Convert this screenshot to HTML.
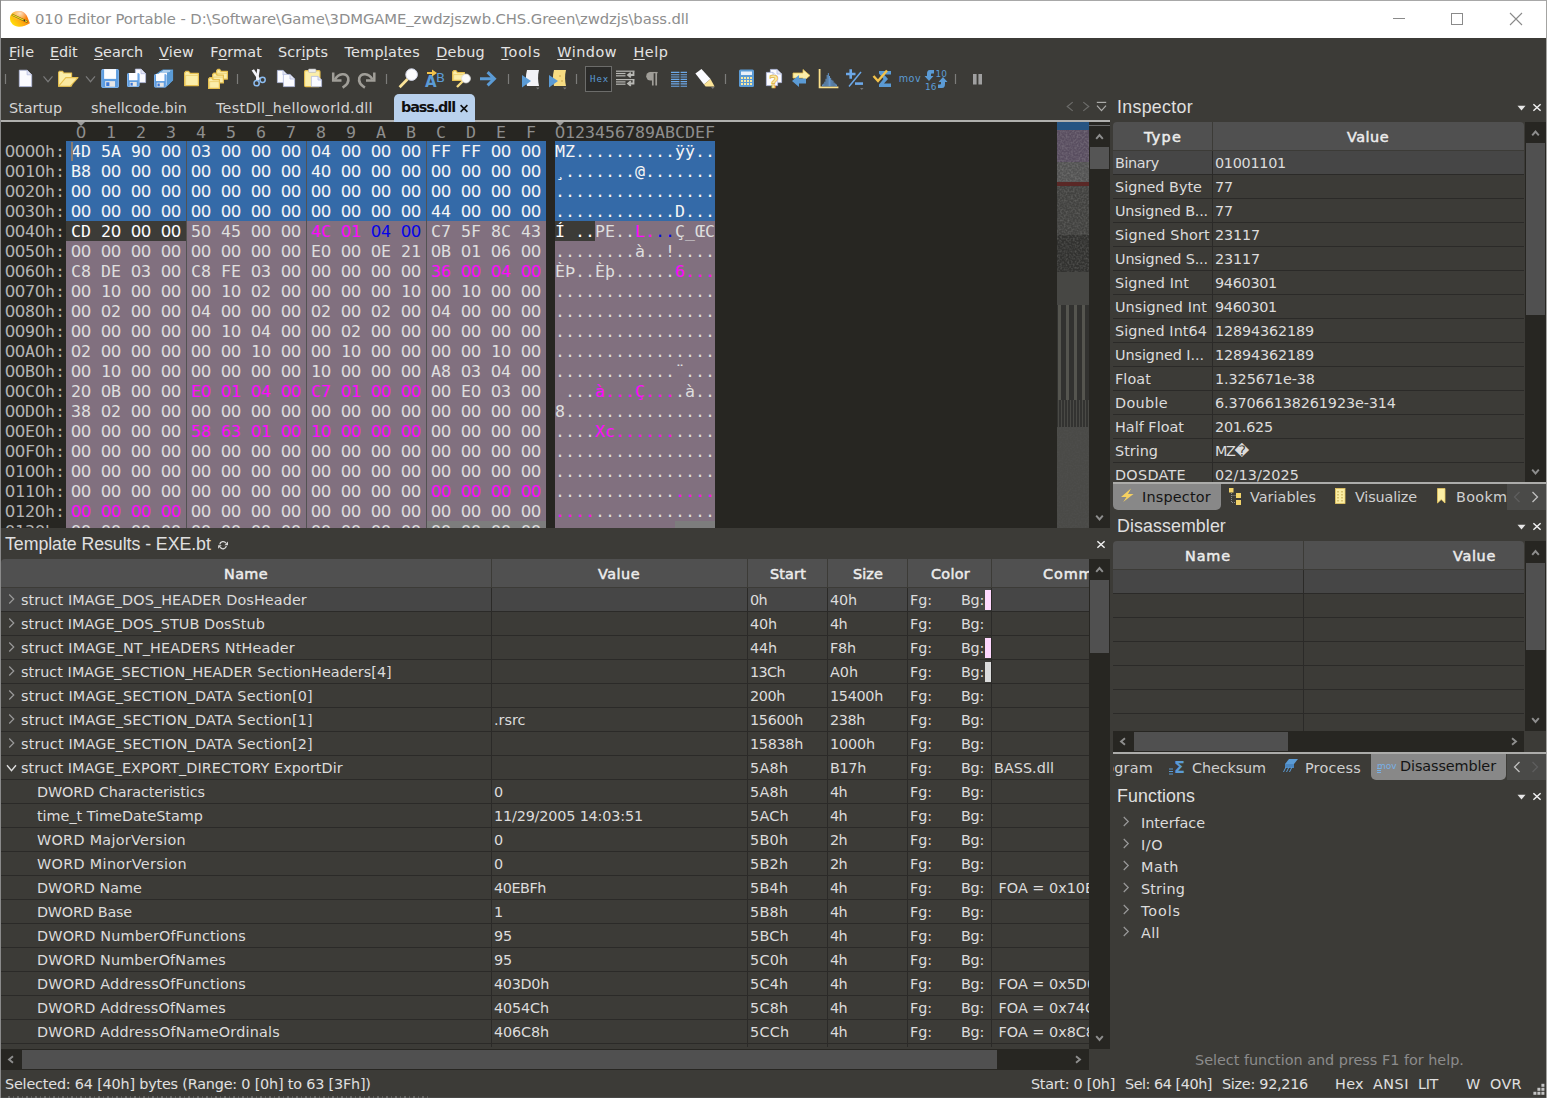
<!DOCTYPE html><html><head><meta charset="utf-8"><title>010 Editor Portable</title><style>
*{margin:0;padding:0;box-sizing:border-box}
html,body{width:1547px;height:1098px;overflow:hidden;background:#3c3b37}
body{position:relative;font-family:"DejaVu Sans","Liberation Sans","Noto Sans CJK SC",sans-serif;font-size:14.4px;color:#dcdcdc}
.a{position:absolute;white-space:pre}
.t{position:absolute;white-space:pre;line-height:20px;height:20px}
.hx{position:absolute;white-space:pre;font-family:"DejaVu Sans Mono","Liberation Mono",monospace;font-size:16.61px;line-height:20px;height:20px}
.hx i{font-family:"DejaVu Sans","Liberation Sans",sans-serif;font-style:normal;letter-spacing:-0.568px;margin:0 0.28px 0 -0.28px}
.m{color:#ff08ff} .b{color:#0404e8}
svg{position:absolute;overflow:visible;left:0;top:0}
u{text-underline-offset:2px;text-decoration-thickness:1px}
</style></head><body>
<div class="a" style="left:0px;top:0px;width:1547px;height:38px;background:#ffffff;"></div>
<div class="a" style="left:0px;top:0px;width:1547px;height:1px;background:#a8a8a8;"></div>
<div class="t" style="left:35.0px;top:9px;font-size:14.8px;color:#8e8e8e;letter-spacing:-0.083px;">010 Editor Portable - D:\Software\Game\3DMGAME_zwdzjszwb.CHS.Green\zwdzjs\bass.dll</div>
<svg width="1" height="1"><defs><linearGradient id="ig" x1="0.1" y1="0.9" x2="0.95" y2="0.3"><stop offset="0" stop-color="#ffe408"/><stop offset="0.45" stop-color="#ffb010"/><stop offset="1" stop-color="#f86808"/></linearGradient><radialGradient id="ih" cx="0.5" cy="0.15" r="0.45"><stop offset="0" stop-color="#fff" stop-opacity="0.75"/><stop offset="1" stop-color="#fff" stop-opacity="0"/></radialGradient></defs><path d="M10 17.5C10.3 13.8 14 11 19 11C23 11 26 13.5 27.6 17.5L29.9 23.3C27 25.2 23 26.8 19 26.8C14 26.8 9.6 23 10 17.5Z" fill="url(#ig)"/><path d="M10 17.5C10.3 13.8 14 11 19 11C23 11 26 13.5 27.6 17.5L29.9 23.3C27 25.2 23 26.8 19 26.8C14 26.8 9.6 23 10 17.5Z" fill="url(#ih)"/><path d="M12 14.6L27.6 22" stroke="#7a5a10" stroke-width="2"/><path d="M12.2 14.7L27.2 21.8" stroke="#ece424" stroke-width="1.1"/><circle cx="24.3" cy="20.4" r="0.8" fill="#303030"/></svg>
<svg width="1" height="1"><path d="M1393 18.5H1405" stroke="#8a8a8a" stroke-width="1"/><rect x="1451.5" y="13.5" width="11" height="11" fill="none" stroke="#8a8a8a"/><path d="M1510 13L1522 25M1522 13L1510 25" stroke="#8a8a8a" stroke-width="1.1"/></svg>
<div class="t" style="left:9.0px;top:42px;color:#e4e4e4;letter-spacing:0.301px;"><u>F</u>ile</div>
<div class="t" style="left:50.0px;top:42px;color:#e4e4e4;letter-spacing:-0.072px;"><u>E</u>dit</div>
<div class="t" style="left:94.0px;top:42px;color:#e4e4e4;letter-spacing:-0.046px;"><u>S</u>earch</div>
<div class="t" style="left:159.0px;top:42px;color:#e4e4e4;letter-spacing:0.207px;"><u>V</u>iew</div>
<div class="t" style="left:210.3px;top:42px;color:#e4e4e4;letter-spacing:0.193px;">F<u>o</u>rmat</div>
<div class="t" style="left:278.0px;top:42px;color:#e4e4e4;letter-spacing:0.133px;">Scr<u>i</u>pts</div>
<div class="t" style="left:344.4px;top:42px;color:#e4e4e4;letter-spacing:0.266px;">Temp<u>l</u>ates</div>
<div class="t" style="left:436.2px;top:42px;color:#e4e4e4;letter-spacing:0.288px;"><u>D</u>ebug</div>
<div class="t" style="left:501.3px;top:42px;color:#e4e4e4;letter-spacing:0.845px;"><u>T</u>ools</div>
<div class="t" style="left:557.2px;top:42px;color:#e4e4e4;letter-spacing:0.537px;"><u>W</u>indow</div>
<div class="t" style="left:633.4px;top:42px;color:#e4e4e4;letter-spacing:0.592px;"><u>H</u>elp</div>
<svg width="1" height="1"><path d="M5.5 74V84" stroke="#7c7c7a" stroke-width="1.2"/></svg>
<svg width="1" height="1"><path d="M237.5 74V84" stroke="#7c7c7a" stroke-width="1.2"/></svg>
<svg width="1" height="1"><path d="M386.5 74V84" stroke="#7c7c7a" stroke-width="1.2"/></svg>
<svg width="1" height="1"><path d="M508.5 74V84" stroke="#7c7c7a" stroke-width="1.2"/></svg>
<svg width="1" height="1"><path d="M576.5 74V84" stroke="#7c7c7a" stroke-width="1.2"/></svg>
<svg width="1" height="1"><path d="M725.5 74V84" stroke="#7c7c7a" stroke-width="1.2"/></svg>
<svg width="1" height="1"><path d="M955.5 74V84" stroke="#7c7c7a" stroke-width="1.2"/></svg>
<svg width="1" height="1"><path d="M19.299999999999997 70.2H27.099999999999994L31.699999999999996 74.8V86.6H19.299999999999997Z" fill="#fbfbff" stroke="#b4bce0" stroke-width="0.8"/><path d="M27.099999999999994 70.2V74.8H31.699999999999996" fill="#e4e6f4" stroke="#b4bce0" stroke-width="0.8"/></svg>
<svg width="1" height="1"><polyline points="43.5,76.3 48,81.7 52.5,76.3" fill="none" stroke="#7a7a7a" stroke-width="1.2"/></svg>
<svg width="1" height="1"><path d="M58.6 86V72.4L59.6 71.2H62.6L63.6 73H71.6V86Z" fill="#fbeeaa" stroke="#e6c050" stroke-width="1.1" stroke-linejoin="round"/><path d="M58.6 86.2L65.8 77.6H78L70.4 86.2Z" fill="#fbe9a0" stroke="#e6c050" stroke-width="1.1" stroke-linejoin="round"/></svg>
<svg width="1" height="1"><polyline points="86.0,76.3 90.5,81.7 95.0,76.3" fill="none" stroke="#7a7a7a" stroke-width="1.2"/></svg>
<svg width="1" height="1"><rect x="101.3" y="69.1" width="17.6" height="18.8" rx="1.6" fill="#5c9ce0"/><rect x="101.8" y="69.6" width="16.6" height="17.8" rx="1.2" fill="none" stroke="#8cbcf0" stroke-width="0.7"/><rect x="104.116" y="69.1" width="11.968000000000002" height="9.776000000000002" fill="#fdfdff"/><rect x="105.172" y="81.13199999999999" width="9.856000000000002" height="5.64" fill="#e6e6e6"/><rect x="106.228" y="82.25999999999999" width="3.168" height="3.7600000000000002" fill="#3c78d8"/></svg>
<svg width="1" height="1"><path d="M135.4 69.10000000000001H141L145.6 73.7V82.6H135.4Z" fill="#fbfbff" stroke="#b4bce0" stroke-width="0.8"/><path d="M141 69.10000000000001V73.7H145.6" fill="#e4e6f4" stroke="#b4bce0" stroke-width="0.8"/><rect x="127" y="73" width="12.5" height="14" rx="1.6" fill="#5c9ce0"/><rect x="127.5" y="73.5" width="11.5" height="13" rx="1.2" fill="none" stroke="#8cbcf0" stroke-width="0.7"/><rect x="129.0" y="73" width="8.5" height="7.28" fill="#fdfdff"/><rect x="129.75" y="81.96000000000001" width="7.000000000000001" height="4.2" fill="#e6e6e6"/><rect x="130.5" y="82.8" width="2.25" height="2.8000000000000003" fill="#3c78d8"/></svg>
<svg width="1" height="1"><path d="M160 72L163 70H172.5V80L169.5 83H160Z" fill="#fafafe" stroke="#5b9bd5" stroke-width="1.2"/><path d="M170 70.5L172.8 70V80.5L170 83Z" fill="#5b9bd5"/><path d="M157 74L160 72H169.5V83L166.5 86H157Z" fill="#fafafe" stroke="#5b9bd5" stroke-width="1.2"/><path d="M167 72.5L169.8 72V83.5L167 86Z" fill="#5b9bd5"/><rect x="154" y="74" width="12.5" height="13.6" rx="1.6" fill="#5c9ce0"/><rect x="154.5" y="74.5" width="11.5" height="12.6" rx="1.2" fill="none" stroke="#8cbcf0" stroke-width="0.7"/><rect x="156.0" y="74" width="8.5" height="7.072" fill="#fdfdff"/><rect x="156.75" y="82.70400000000001" width="7.000000000000001" height="4.08" fill="#e6e6e6"/><rect x="157.5" y="83.52" width="2.25" height="2.72" fill="#3c78d8"/></svg>
<svg width="1" height="1"><path d="M184.6 85.60000000000001V72.8L185.8 71.39999999999999H188.5L190.3 73.39999999999999H198.4V85.60000000000001Z" fill="#fbeeaa" stroke="#e6c050" stroke-width="1.2" stroke-linejoin="round"/><path d="M185.6 85.2V75.39999999999999H198.2" fill="none" stroke="#ecd070" stroke-width="0.9"/></svg>
<svg width="1" height="1"><path d="M216.6 79.10000000000001V70.7L217.8 69.3H219.6L221.04 71.3H227.4V79.10000000000001Z" fill="#fbeeaa" stroke="#e6c050" stroke-width="1.2" stroke-linejoin="round"/><path d="M217.6 78.7V73.3H227.2" fill="none" stroke="#ecd070" stroke-width="0.9"/><path d="M212.6 82.9V74.5L213.8 73.1H215.6L217.04 75.1H223.4V82.9Z" fill="#fbeeaa" stroke="#e6c050" stroke-width="1.2" stroke-linejoin="round"/><path d="M213.6 82.5V77.1H223.2" fill="none" stroke="#ecd070" stroke-width="0.9"/><path d="M208.6 88.4V79L209.8 77.6H211.6L213.04 79.6H219.4V88.4Z" fill="#fbeeaa" stroke="#e6c050" stroke-width="1.2" stroke-linejoin="round"/><path d="M209.6 88V81.6H219.2" fill="none" stroke="#ecd070" stroke-width="0.9"/></svg>
<svg width="1" height="1"><path d="M251.6 70.4L254 69.2L260.4 79L258.4 80.6Z" fill="#f4f4fa"/><path d="M257.2 68.8L259.8 69.4L258 81L255.8 80.4Z" fill="#f4f4fa"/><circle cx="256.6" cy="83.2" r="2.6" fill="none" stroke="#8cbcf0" stroke-width="1.5"/><circle cx="262.6" cy="79.8" r="2.6" fill="none" stroke="#8cbcf0" stroke-width="1.5"/></svg>
<svg width="1" height="1"><path d="M277.4 70.4H283L287.6 75V82.6H277.4Z" fill="#fbfbff" stroke="#b4bce0" stroke-width="0.8"/><path d="M283 70.4V75H287.6" fill="#e4e6f4" stroke="#b4bce0" stroke-width="0.8"/><path d="M283.4 74.4H290L294.6 79V86.6H283.4Z" fill="#fbfbff" stroke="#b4bce0" stroke-width="0.8"/><path d="M290 74.4V79H294.6" fill="#e4e6f4" stroke="#b4bce0" stroke-width="0.8"/></svg>
<svg width="1" height="1"><rect x="304.6" y="70.6" width="15.4" height="16" rx="1.2" fill="#fbeeaa" stroke="#e6c050" stroke-width="1.1"/><rect x="308.5" y="69" width="7.5" height="3.4" rx="0.8" fill="#eeeeee" stroke="#b0b0b0" stroke-width="0.6"/><path d="M311.4 76.4H318L321.6 80V86.6H311.4Z" fill="#fbfbff" stroke="#b4bce0" stroke-width="0.8"/><path d="M318 76.4V80H321.6" fill="#e4e6f4" stroke="#b4bce0" stroke-width="0.8"/></svg>
<svg width="1" height="1"><path d="M333.2 72.5V80.6H341.5" fill="none" stroke="#a09e98" stroke-width="2.5"/><path d="M335 79.5C338.5 73 346.5 72.5 348.2 78C349.2 82 346.5 85.2 342.6 87.6" fill="none" stroke="#a09e98" stroke-width="2.6"/></svg>
<svg width="1" height="1"><path d="M374.3 72.5V80.6H366" fill="none" stroke="#a09e98" stroke-width="2.5"/><path d="M372.5 79.5C369 73 361 72.5 359.3 78C358.3 82 361 85.2 364.9 87.6" fill="none" stroke="#a09e98" stroke-width="2.6"/></svg>
<svg width="1" height="1"><path d="M399.6 87.2L407.6 79" stroke="#fbe498" stroke-width="2.8"/><circle cx="411.6" cy="74.6" r="5.8" fill="#fdfdff" stroke="#d4d8e8" stroke-width="1"/></svg>
<svg width="1" height="1"><text x="425" y="87" font-family="'DejaVu Sans','Liberation Sans','Noto Sans CJK SC',sans-serif" font-weight="bold" font-size="15" fill="#5b9bd5">A</text><text x="436" y="82" font-family="'DejaVu Sans','Liberation Sans','Noto Sans CJK SC',sans-serif" font-size="13" fill="#5b9bd5">B</text><path d="M427 72H432V69.5L437 73L432 76.5V74H427Z" fill="#f2c24a"/></svg>
<svg width="1" height="1"><path d="M452.6 80.4V72L453.8 70.6H455.9L457.46 72.6H464.4V80.4Z" fill="#fbeeaa" stroke="#e6c050" stroke-width="1.2" stroke-linejoin="round"/><path d="M453.6 80V74.6H464.2" fill="none" stroke="#ecd070" stroke-width="0.9"/><path d="M457 87L463 81" stroke="#f7dc82" stroke-width="2.4"/><circle cx="466" cy="78.5" r="4.4" fill="#fafafa" stroke="#dcdcdc" stroke-width="0.8"/></svg>
<svg width="1" height="1"><path d="M480 78.8H493.5M487.6 72.2L494.4 78.8L487.6 85.4" fill="none" stroke="#5b9bd5" stroke-width="3"/></svg>
<svg width="1" height="1"><path d="M527 70H539C537.5 76 538 81 539 86H527C525.5 81 525.5 76 527 70Z" fill="#f2f2f6"/><path d="M522 75L531 81L522 87.5Z" fill="#5b9bd5"/><path d="M536 87.5L539.5 87.5L537.8 89.5Z" fill="#777"/></svg>
<svg width="1" height="1"><path d="M554 70H566C564.5 76 565 81 566 86H554C552.5 81 552.5 76 554 70Z" fill="#f7dc82"/><path d="M549 75L558 81L549 87.5Z" fill="#5b9bd5"/><path d="M563 87.5L566.5 87.5L564.8 89.5Z" fill="#777"/><circle cx="560" cy="76" r="0.8" fill="#c8a040"/><circle cx="562" cy="81" r="0.8" fill="#c8a040"/></svg>
<div class="a" style="left:585px;top:66px;width:27px;height:26px;background:#2b2b29;border:1px solid #6c6c6a"></div>
<div class="a" style="left:590px;top:72.4px;font-family:'DejaVu Sans Mono','Liberation Mono',monospace;font-size:9px;line-height:14px;color:#5b9bd5;letter-spacing:1px">Hex</div>
<svg width="1" height="1"><path d="M616 71.2H634.5" stroke="#b8b8b4" stroke-width="1.2"/><path d="M616 73.5H625.5" stroke="#b8b8b4" stroke-width="1.2"/><path d="M616 75.8H625.5" stroke="#b8b8b4" stroke-width="1.2"/><path d="M616 79.6H634.5" stroke="#b8b8b4" stroke-width="1.2"/><path d="M616 81.9H625.5" stroke="#b8b8b4" stroke-width="1.2"/><path d="M616 84.2H625.5" stroke="#b8b8b4" stroke-width="1.2"/><path d="M633.5 71.5V75H628.5M630.8 72.6L628 75L630.8 77.4M633.5 80V83.5H628.5M630.8 81.1L628 83.5L630.8 85.9" stroke="#b8b8b4" stroke-width="1.8" fill="none"/></svg>
<svg width="1" height="1"><path d="M652.6 72H650.4A4.2 4.2 0 0 0 650.4 80.4H652.6Z" fill="#a09e98"/><path d="M652.8 72V85.6M656.2 72V85.6" stroke="#a09e98" stroke-width="1.7" fill="none"/><path d="M650 72.6H657.6" stroke="#a09e98" stroke-width="1.3"/></svg>
<svg width="1" height="1"><path d="M671 72.4H679.4M680.6 72.4H687" stroke="#6ca8e8" stroke-width="1.15"/><path d="M671 74.7H679.4M680.6 74.7H687" stroke="#6ca8e8" stroke-width="1.15"/><path d="M671 77H679.4M680.6 77H687" stroke="#6ca8e8" stroke-width="1.15"/><path d="M671 79.3H679.4M680.6 79.3H687" stroke="#6ca8e8" stroke-width="1.15"/><path d="M671 81.6H679.4M680.6 81.6H687" stroke="#6ca8e8" stroke-width="1.15"/><path d="M671 83.9H679.4M680.6 83.9H687" stroke="#6ca8e8" stroke-width="1.15"/><path d="M671 86.2H679.4M680.6 86.2H687" stroke="#6ca8e8" stroke-width="1.15"/></svg>
<svg width="1" height="1"><path d="M695.4 73.5L701.5 69L710.5 79L704 84.6Z" fill="#fbfbff"/><path d="M704 84.6L710.5 79L714.6 86.4H705.6Z" fill="#fbe498"/><path d="M711 87L714.5 87L712.8 89Z" fill="#777"/></svg>
<svg width="1" height="1"><rect x="739" y="69.5" width="15" height="17.5" rx="1.5" fill="#5b9bd5"/><rect x="741" y="71.5" width="11" height="3.5" fill="#e8f0fa"/><rect x="741" y="77" width="2" height="2" fill="#f8e8a0"/><rect x="741" y="80" width="2" height="2" fill="#f8e8a0"/><rect x="741" y="83" width="2" height="2" fill="#f8e8a0"/><rect x="744" y="77" width="2" height="2" fill="#f8e8a0"/><rect x="744" y="80" width="2" height="2" fill="#f8e8a0"/><rect x="744" y="83" width="2" height="2" fill="#f8e8a0"/><rect x="747" y="77" width="2" height="2" fill="#f8e8a0"/><rect x="747" y="80" width="2" height="2" fill="#f8e8a0"/><rect x="747" y="83" width="2" height="2" fill="#f8e8a0"/><rect x="750" y="77" width="2" height="2" fill="#f8e8a0"/><rect x="750" y="80" width="2" height="2" fill="#f8e8a0"/><rect x="750" y="83" width="2" height="2" fill="#f8e8a0"/></svg>
<svg width="1" height="1"><path d="M770.4 69.4H777L781.6 74V82.6H770.4Z" fill="#fbfbff" stroke="#b4bce0" stroke-width="0.8"/><path d="M777 69.4V74H781.6" fill="#e4e6f4" stroke="#b4bce0" stroke-width="0.8"/><path d="M766.4 72.4H773L777.6 77V85.6H766.4Z" fill="#fbfbff" stroke="#b4bce0" stroke-width="0.8"/><path d="M773 72.4V77H777.6" fill="#e4e6f4" stroke="#b4bce0" stroke-width="0.8"/><text x="769" y="88.2" font-family="'DejaVu Sans','Liberation Sans','Noto Sans CJK SC',sans-serif" font-weight="bold" font-size="17" fill="#fbe9a0" stroke="#e0b040" stroke-width="0.7">?</text></svg>
<svg width="1" height="1"><path d="M810 75.5L803 69.5V73H793V78H803V81.5Z" fill="#fbeeaa" stroke="#e6c050" stroke-width="0.8"/><path d="M792 81L799 75V78.5H806V83.5H799V87Z" fill="#5b9bd5"/></svg>
<svg width="1" height="1"><path d="M819.6 69V87.4H838.4" fill="none" stroke="#fbe08a" stroke-width="1.8"/><path d="M822.60 86.4V84.5" stroke="#6ca8e8" stroke-width="0.85"/><path d="M823.75 86.4V83.6" stroke="#6ca8e8" stroke-width="0.85"/><path d="M824.90 86.4V81.7" stroke="#6ca8e8" stroke-width="0.85"/><path d="M826.05 86.4V78.8" stroke="#6ca8e8" stroke-width="0.85"/><path d="M827.20 86.4V75.0" stroke="#6ca8e8" stroke-width="0.85"/><path d="M828.35 86.4V73.1" stroke="#6ca8e8" stroke-width="0.85"/><path d="M829.50 86.4V76.0" stroke="#6ca8e8" stroke-width="0.85"/><path d="M830.65 86.4V77.9" stroke="#6ca8e8" stroke-width="0.85"/><path d="M831.80 86.4V79.8" stroke="#6ca8e8" stroke-width="0.85"/><path d="M832.95 86.4V80.7" stroke="#6ca8e8" stroke-width="0.85"/><path d="M834.10 86.4V82.6" stroke="#6ca8e8" stroke-width="0.85"/><path d="M835.25 86.4V83.6" stroke="#6ca8e8" stroke-width="0.85"/><path d="M836.40 86.4V84.5" stroke="#6ca8e8" stroke-width="0.85"/></svg>
<svg width="1" height="1"><path d="M846 74H855.5M850.7 69.2V78.8" stroke="#6ca8e8" stroke-width="2.6"/><path d="M855 83.6H863" stroke="#6ca8e8" stroke-width="2.6"/><path d="M849 86.5L861 72" stroke="#6ca8e8" stroke-width="1.5"/><path d="M860 88L863.5 88L861.8 90Z" fill="#777"/></svg>
<svg width="1" height="1"><path d="M879 71H891V74.5H884L888 79L884 83.5H891V87H879V84.5L883.5 79L879 73.5Z" fill="#5b9bd5"/><path d="M873.5 76L878 81L887 70.5" fill="none" stroke="#f2c24a" stroke-width="2.4"/></svg>
<div class="a" style="left:898.8px;top:72.3px;font-family:'DejaVu Sans','Liberation Sans','Noto Sans CJK SC',sans-serif;font-size:9.6px;line-height:14px;letter-spacing:0.45px;color:#5b9bd5">mov</div>
<svg width="1" height="1"><path d="M934 70H930C927.5 70 927 72 927 74V76H924.5L929 81L933.5 76H931V74.5C931 73.6 931.6 73.6 932.5 73.6H934Z" fill="#5b9bd5"/><path d="M938 88H942C944.5 88 945 86 945 84V82H947.5L943 77L938.5 82H941V83.5C941 84.4 940.4 84.4 939.5 84.4H938Z" fill="#5b9bd5"/><text x="935.5" y="76.5" font-family="'DejaVu Sans','Liberation Sans','Noto Sans CJK SC',sans-serif" font-size="9" fill="#5b9bd5">10</text><text x="925" y="89.5" font-family="'DejaVu Sans','Liberation Sans','Noto Sans CJK SC',sans-serif" font-size="9" fill="#5b9bd5">16</text></svg>
<svg width="1" height="1"><rect x="973" y="74" width="3.6" height="10.5" fill="#a0a0a0"/><rect x="978.4" y="74" width="3.6" height="10.5" fill="#a0a0a0"/></svg>
<div class="t" style="left:9.0px;top:98px;color:#d4d4d4;letter-spacing:-0.063px;">Startup</div>
<div class="t" style="left:91.0px;top:98px;color:#d4d4d4;letter-spacing:0.072px;">shellcode.bin</div>
<div class="t" style="left:216.0px;top:98px;color:#d4d4d4;letter-spacing:0.281px;">TestDll_helloworld.dll</div>
<svg width="1" height="1"><polyline points="1072.728,102.1 1067.272,106.5 1072.728,110.9" fill="none" stroke="#6c6c6a" stroke-width="1.2"/></svg>
<svg width="1" height="1"><polyline points="1083.272,102.1 1088.728,106.5 1083.272,110.9" fill="none" stroke="#6c6c6a" stroke-width="1.2"/></svg>
<svg width="1" height="1"><path d="M1096.8 102.4H1106.2" stroke="#acacaa" stroke-width="1.2"/><path d="M1097 105.6L1101.5 110.6L1106 105.6" fill="none" stroke="#acacaa" stroke-width="1.2"/></svg>
<div class="a" style="left:1px;top:120px;width:1109px;height:2px;background:#b0b0ae;"></div>
<div class="a" style="left:394px;top:94px;width:81px;height:28px;background:#b9d1ed;border-radius:5px 5px 0 0"></div>
<div class="t" style="left:401.0px;top:97px;color:#101010;font-weight:bold;letter-spacing:-1.102px;">bass.dll</div>
<svg width="1" height="1"><path d="M460.6 105.1L467.4 111.9M467.4 105.1L460.6 111.9" stroke="#101010" stroke-width="1.5" fill="none"/></svg>
<div class="a" style="left:1px;top:122px;width:1109px;height:406px;background:#272622;"></div>
<div class="hx" style="left:76px;top:123px;color:#8e8e8e"><i>0</i></div>
<div class="hx" style="left:106px;top:123px;color:#8e8e8e">1</div>
<div class="hx" style="left:136px;top:123px;color:#8e8e8e">2</div>
<div class="hx" style="left:166px;top:123px;color:#8e8e8e">3</div>
<div class="hx" style="left:196px;top:123px;color:#8e8e8e">4</div>
<div class="hx" style="left:226px;top:123px;color:#8e8e8e">5</div>
<div class="hx" style="left:256px;top:123px;color:#8e8e8e">6</div>
<div class="hx" style="left:286px;top:123px;color:#8e8e8e">7</div>
<div class="hx" style="left:316px;top:123px;color:#8e8e8e">8</div>
<div class="hx" style="left:346px;top:123px;color:#8e8e8e">9</div>
<div class="hx" style="left:376px;top:123px;color:#8e8e8e">A</div>
<div class="hx" style="left:406px;top:123px;color:#8e8e8e">B</div>
<div class="hx" style="left:436px;top:123px;color:#8e8e8e">C</div>
<div class="hx" style="left:466px;top:123px;color:#8e8e8e">D</div>
<div class="hx" style="left:496px;top:123px;color:#8e8e8e">E</div>
<div class="hx" style="left:526px;top:123px;color:#8e8e8e">F</div>
<div class="hx" style="left:555px;top:123px;color:#8e8e8e"><i>0</i>123456789ABCDEF</div>
<svg width="1" height="1"><path d="M77 122L81 126L85 122Z" fill="#9a9a9a"/><path d="M556 122L560 126L564 122Z" fill="#9a9a9a"/></svg>
<div class="a" style="left:66px;top:141px;width:480px;height:80px;background:#346aa8;"></div>
<div class="a" style="left:555px;top:141px;width:160px;height:80px;background:#346aa8;"></div>
<div class="a" style="left:66px;top:221px;width:480px;height:307px;background:#81707f;"></div>
<div class="a" style="left:555px;top:221px;width:160px;height:307px;background:#81707f;"></div>
<div class="a" style="left:66px;top:221px;width:120px;height:20px;background:#3c3b37;"></div>
<div class="a" style="left:555px;top:221px;width:40px;height:20px;background:#3c3b37;"></div>
<div class="a" style="left:426px;top:521px;width:120px;height:7px;background:#7d7d7d;"></div>
<div class="a" style="left:675px;top:521px;width:40px;height:7px;background:#7d7d7d;"></div>
<div class="a" style="left:186px;top:141px;width:1px;height:387px;background:#525252;"></div>
<div class="a" style="left:306px;top:141px;width:1px;height:387px;background:#525252;"></div>
<div class="a" style="left:426px;top:141px;width:1px;height:387px;background:#525252;"></div>
<div class="a" style="left:1px;top:142px;width:1056px;height:386px;overflow:hidden">
<div class="hx" style="left:4px;top:0px;color:#b4b4b4"><i>0000</i>h:</div>
<div class="hx" style="left:70px;top:0px;color:#f6f6f6">4D 5A 9<i>0</i> <i>00</i> <i>0</i>3 <i>00</i> <i>00</i> <i>00</i> <i>0</i>4 <i>00</i> <i>00</i> <i>00</i> FF FF <i>00</i> <i>00</i></div>
<div class="hx" style="left:554px;top:0px;color:#f6f6f6">MZ..........ÿÿ..</div>
<div class="hx" style="left:4px;top:20px;color:#b4b4b4"><i>00</i>1<i>0</i>h:</div>
<div class="hx" style="left:70px;top:20px;color:#f6f6f6">B8 <i>00</i> <i>00</i> <i>00</i> <i>00</i> <i>00</i> <i>00</i> <i>00</i> 4<i>0</i> <i>00</i> <i>00</i> <i>00</i> <i>00</i> <i>00</i> <i>00</i> <i>00</i></div>
<div class="hx" style="left:554px;top:20px;color:#f6f6f6">¸.......@.......</div>
<div class="hx" style="left:4px;top:40px;color:#b4b4b4"><i>00</i>2<i>0</i>h:</div>
<div class="hx" style="left:70px;top:40px;color:#f6f6f6"><i>00</i> <i>00</i> <i>00</i> <i>00</i> <i>00</i> <i>00</i> <i>00</i> <i>00</i> <i>00</i> <i>00</i> <i>00</i> <i>00</i> <i>00</i> <i>00</i> <i>00</i> <i>00</i></div>
<div class="hx" style="left:554px;top:40px;color:#f6f6f6">................</div>
<div class="hx" style="left:4px;top:60px;color:#b4b4b4"><i>00</i>3<i>0</i>h:</div>
<div class="hx" style="left:70px;top:60px;color:#f6f6f6"><i>00</i> <i>00</i> <i>00</i> <i>00</i> <i>00</i> <i>00</i> <i>00</i> <i>00</i> <i>00</i> <i>00</i> <i>00</i> <i>00</i> 44 <i>00</i> <i>00</i> <i>00</i></div>
<div class="hx" style="left:554px;top:60px;color:#f6f6f6">............D...</div>
<div class="hx" style="left:4px;top:80px;color:#b4b4b4"><i>00</i>4<i>0</i>h:</div>
<div class="hx" style="left:70px;top:80px;color:#dedede"><span style="color:#fff">CD 2<i>0</i> <i>00</i> <i>00</i></span> 5<i>0</i> 45 <i>00</i> <i>00</i> <span class="m">4C</span> <span class="m"><i>0</i>1</span> <span class="b"><i>0</i>4</span> <span class="b"><i>00</i></span> C7 5F 8C 43</div>
<div class="hx" style="left:554px;top:80px;color:#dedede"><span style="color:#fff">Í ..</span>PE..<span class="m">L</span><span class="m">.</span><span class="b">.</span><span class="b">.</span>Ç_ŒC</div>
<div class="hx" style="left:4px;top:100px;color:#b4b4b4"><i>00</i>5<i>0</i>h:</div>
<div class="hx" style="left:70px;top:100px;color:#dedede"><i>00</i> <i>00</i> <i>00</i> <i>00</i> <i>00</i> <i>00</i> <i>00</i> <i>00</i> E<i>0</i> <i>00</i> <i>0</i>E 21 <i>0</i>B <i>0</i>1 <i>0</i>6 <i>00</i></div>
<div class="hx" style="left:554px;top:100px;color:#dedede">........à..!....</div>
<div class="hx" style="left:4px;top:120px;color:#b4b4b4"><i>00</i>6<i>0</i>h:</div>
<div class="hx" style="left:70px;top:120px;color:#dedede">C8 DE <i>0</i>3 <i>00</i> C8 FE <i>0</i>3 <i>00</i> <i>00</i> <i>00</i> <i>00</i> <i>00</i> <span class="m">36</span> <span class="m"><i>00</i></span> <span class="m"><i>0</i>4</span> <span class="m"><i>00</i></span></div>
<div class="hx" style="left:554px;top:120px;color:#dedede">ÈÞ..Èþ......<span class="m">6</span><span class="m">.</span><span class="m">.</span><span class="m">.</span></div>
<div class="hx" style="left:4px;top:140px;color:#b4b4b4"><i>00</i>7<i>0</i>h:</div>
<div class="hx" style="left:70px;top:140px;color:#dedede"><i>00</i> 1<i>0</i> <i>00</i> <i>00</i> <i>00</i> 1<i>0</i> <i>0</i>2 <i>00</i> <i>00</i> <i>00</i> <i>00</i> 1<i>0</i> <i>00</i> 1<i>0</i> <i>00</i> <i>00</i></div>
<div class="hx" style="left:554px;top:140px;color:#dedede">................</div>
<div class="hx" style="left:4px;top:160px;color:#b4b4b4"><i>00</i>8<i>0</i>h:</div>
<div class="hx" style="left:70px;top:160px;color:#dedede"><i>00</i> <i>0</i>2 <i>00</i> <i>00</i> <i>0</i>4 <i>00</i> <i>00</i> <i>00</i> <i>0</i>2 <i>00</i> <i>0</i>2 <i>00</i> <i>0</i>4 <i>00</i> <i>00</i> <i>00</i></div>
<div class="hx" style="left:554px;top:160px;color:#dedede">................</div>
<div class="hx" style="left:4px;top:180px;color:#b4b4b4"><i>00</i>9<i>0</i>h:</div>
<div class="hx" style="left:70px;top:180px;color:#dedede"><i>00</i> <i>00</i> <i>00</i> <i>00</i> <i>00</i> 1<i>0</i> <i>0</i>4 <i>00</i> <i>00</i> <i>0</i>2 <i>00</i> <i>00</i> <i>00</i> <i>00</i> <i>00</i> <i>00</i></div>
<div class="hx" style="left:554px;top:180px;color:#dedede">................</div>
<div class="hx" style="left:4px;top:200px;color:#b4b4b4"><i>00</i>A<i>0</i>h:</div>
<div class="hx" style="left:70px;top:200px;color:#dedede"><i>0</i>2 <i>00</i> <i>00</i> <i>00</i> <i>00</i> <i>00</i> 1<i>0</i> <i>00</i> <i>00</i> 1<i>0</i> <i>00</i> <i>00</i> <i>00</i> <i>00</i> 1<i>0</i> <i>00</i></div>
<div class="hx" style="left:554px;top:200px;color:#dedede">................</div>
<div class="hx" style="left:4px;top:220px;color:#b4b4b4"><i>00</i>B<i>0</i>h:</div>
<div class="hx" style="left:70px;top:220px;color:#dedede"><i>00</i> 1<i>0</i> <i>00</i> <i>00</i> <i>00</i> <i>00</i> <i>00</i> <i>00</i> 1<i>0</i> <i>00</i> <i>00</i> <i>00</i> A8 <i>0</i>3 <i>0</i>4 <i>00</i></div>
<div class="hx" style="left:554px;top:220px;color:#dedede">............¨...</div>
<div class="hx" style="left:4px;top:240px;color:#b4b4b4"><i>00</i>C<i>0</i>h:</div>
<div class="hx" style="left:70px;top:240px;color:#dedede">2<i>0</i> <i>0</i>B <i>00</i> <i>00</i> <span class="m">E<i>0</i></span> <span class="m"><i>0</i>1</span> <span class="m"><i>0</i>4</span> <span class="m"><i>00</i></span> <span class="m">C7</span> <span class="m"><i>0</i>1</span> <span class="m"><i>00</i></span> <span class="m"><i>00</i></span> <i>00</i> E<i>0</i> <i>0</i>3 <i>00</i></div>
<div class="hx" style="left:554px;top:240px;color:#dedede"> ...<span class="m">à</span><span class="m">.</span><span class="m">.</span><span class="m">.</span><span class="m">Ç</span><span class="m">.</span><span class="m">.</span><span class="m">.</span>.à..</div>
<div class="hx" style="left:4px;top:260px;color:#b4b4b4"><i>00</i>D<i>0</i>h:</div>
<div class="hx" style="left:70px;top:260px;color:#dedede">38 <i>0</i>2 <i>00</i> <i>00</i> <i>00</i> <i>00</i> <i>00</i> <i>00</i> <i>00</i> <i>00</i> <i>00</i> <i>00</i> <i>00</i> <i>00</i> <i>00</i> <i>00</i></div>
<div class="hx" style="left:554px;top:260px;color:#dedede">8...............</div>
<div class="hx" style="left:4px;top:280px;color:#b4b4b4"><i>00</i>E<i>0</i>h:</div>
<div class="hx" style="left:70px;top:280px;color:#dedede"><i>00</i> <i>00</i> <i>00</i> <i>00</i> <span class="m">58</span> <span class="m">63</span> <span class="m"><i>0</i>1</span> <span class="m"><i>00</i></span> <span class="m">1<i>0</i></span> <span class="m"><i>00</i></span> <span class="m"><i>00</i></span> <span class="m"><i>00</i></span> <i>00</i> <i>00</i> <i>00</i> <i>00</i></div>
<div class="hx" style="left:554px;top:280px;color:#dedede">....<span class="m">X</span><span class="m">c</span><span class="m">.</span><span class="m">.</span><span class="m">.</span><span class="m">.</span><span class="m">.</span><span class="m">.</span>....</div>
<div class="hx" style="left:4px;top:300px;color:#b4b4b4"><i>00</i>F<i>0</i>h:</div>
<div class="hx" style="left:70px;top:300px;color:#dedede"><i>00</i> <i>00</i> <i>00</i> <i>00</i> <i>00</i> <i>00</i> <i>00</i> <i>00</i> <i>00</i> <i>00</i> <i>00</i> <i>00</i> <i>00</i> <i>00</i> <i>00</i> <i>00</i></div>
<div class="hx" style="left:554px;top:300px;color:#dedede">................</div>
<div class="hx" style="left:4px;top:320px;color:#b4b4b4"><i>0</i>1<i>00</i>h:</div>
<div class="hx" style="left:70px;top:320px;color:#dedede"><i>00</i> <i>00</i> <i>00</i> <i>00</i> <i>00</i> <i>00</i> <i>00</i> <i>00</i> <i>00</i> <i>00</i> <i>00</i> <i>00</i> <i>00</i> <i>00</i> <i>00</i> <i>00</i></div>
<div class="hx" style="left:554px;top:320px;color:#dedede">................</div>
<div class="hx" style="left:4px;top:340px;color:#b4b4b4"><i>0</i>11<i>0</i>h:</div>
<div class="hx" style="left:70px;top:340px;color:#dedede"><i>00</i> <i>00</i> <i>00</i> <i>00</i> <i>00</i> <i>00</i> <i>00</i> <i>00</i> <i>00</i> <i>00</i> <i>00</i> <i>00</i> <span class="m"><i>00</i></span> <span class="m"><i>00</i></span> <span class="m"><i>00</i></span> <span class="m"><i>00</i></span></div>
<div class="hx" style="left:554px;top:340px;color:#dedede">............<span class="m">.</span><span class="m">.</span><span class="m">.</span><span class="m">.</span></div>
<div class="hx" style="left:4px;top:360px;color:#b4b4b4"><i>0</i>12<i>0</i>h:</div>
<div class="hx" style="left:70px;top:360px;color:#dedede"><span class="m"><i>00</i></span> <span class="m"><i>00</i></span> <span class="m"><i>00</i></span> <span class="m"><i>00</i></span> <i>00</i> <i>00</i> <i>00</i> <i>00</i> <i>00</i> <i>00</i> <i>00</i> <i>00</i> <i>00</i> <i>00</i> <i>00</i> <i>00</i></div>
<div class="hx" style="left:554px;top:360px;color:#dedede"><span class="m">.</span><span class="m">.</span><span class="m">.</span><span class="m">.</span>............</div>
<div class="hx" style="left:4px;top:380px;color:#b4b4b4"><i>0</i>13<i>0</i>h:</div>
<div class="hx" style="left:70px;top:380px;color:#dedede"><i>00</i> <i>00</i> <i>00</i> <i>00</i> <i>00</i> <i>00</i> <i>00</i> <i>00</i> <i>00</i> <i>00</i> <i>00</i> <i>00</i> <i>00</i> <i>00</i> <i>00</i> <i>00</i></div>
<div class="hx" style="left:554px;top:380px;color:#dedede">................</div>
</div>
<div class="a" style="left:71px;top:142px;width:2px;height:19px;background:#8a7c70;"></div>
<div class="a" style="left:1057px;top:122px;width:32px;height:8px;background:#265482;"></div>
<div class="a" style="left:1057px;top:130px;width:32px;height:32px;background:#594e60;"></div>
<div class="a" style="left:1057px;top:162px;width:32px;height:20px;background:#535353;"></div>
<div class="a" style="left:1057px;top:182px;width:32px;height:4px;background:#5a2826;"></div>
<div class="a" style="left:1057px;top:186px;width:32px;height:49px;background:#424240;"></div>
<div class="a" style="left:1057px;top:235px;width:32px;height:37px;background:#323230;"></div>
<div class="a" style="left:1057px;top:272px;width:32px;height:33px;background:#474744;"></div>
<div class="a" style="left:1057px;top:305px;width:32px;height:95px;background:#323230;"></div>
<div class="a" style="left:1057px;top:400px;width:32px;height:27px;background:#333331;"></div>
<div class="a" style="left:1057px;top:427px;width:32px;height:101px;background:#4a4a47;"></div>
<svg style="left:1057px;top:122px" width="32" height="406"><filter id="nz" x="0" y="0" width="100%" height="100%"><feTurbulence type="fractalNoise" baseFrequency="0.55" numOctaves="1" seed="7"/><feColorMatrix type="matrix" values="0 0 0 0 0.75  0 0 0 0 0.75  0 0 0 0 0.72  1.6 0 0 0 -0.62"/></filter><filter id="nz2" x="0" y="0" width="100%" height="100%"><feTurbulence type="fractalNoise" baseFrequency="0.6" numOctaves="1" seed="11"/><feColorMatrix type="matrix" values="0 0 0 0 0.1  0 0 0 0 0.1  0 0 0 0 0.1  1.4 0 0 0 -0.55"/></filter><rect x="0" y="8" width="32" height="52" filter="url(#nz)" opacity="0.28"/><rect x="0" y="64" width="32" height="50" filter="url(#nz)" opacity="0.25"/><rect x="0" y="114" width="32" height="36" filter="url(#nz)" opacity="0.25"/><rect x="0" y="305" width="32" height="101" filter="url(#nz2)" opacity="0.5"/><g fill="#55554f"><rect x="1" y="183" width="3" height="95"/><rect x="9" y="183" width="3" height="95"/><rect x="17" y="183" width="3" height="95"/><rect x="25" y="183" width="3" height="95"/></g><g fill="#4a4a46"><rect x="1" y="278" width="1" height="27"/><rect x="4" y="278" width="1" height="27"/><rect x="7" y="278" width="1" height="27"/><rect x="10" y="278" width="1" height="27"/><rect x="13" y="278" width="1" height="27"/><rect x="16" y="278" width="1" height="27"/><rect x="19" y="278" width="1" height="27"/><rect x="22" y="278" width="1" height="27"/><rect x="25" y="278" width="1" height="27"/><rect x="28" y="278" width="1" height="27"/><rect x="31" y="278" width="1" height="27"/></g></svg>
<div class="a" style="left:1089px;top:122px;width:21px;height:406px;background:#272622;"></div>
<svg width="1" height="1"><polyline points="1096.2,138.98 1099.5,135.02 1102.8,138.98" fill="none" stroke="#8e8e8e" stroke-width="1.9"/></svg>
<div class="a" style="left:1089px;top:125px;width:21px;height:1px;background:#6a6a6a;"></div>
<svg width="1" height="1"><polyline points="1096.2,515.52 1099.5,519.48 1102.8,515.52" fill="none" stroke="#8e8e8e" stroke-width="1.9"/></svg>
<div class="a" style="left:1090px;top:147px;width:19px;height:22px;background:#555555;"></div>
<div class="t" style="left:5.0px;top:534px;font-family:'Liberation Sans','Noto Sans CJK SC',sans-serif;font-size:17.8px;color:#e0e0e0;letter-spacing:-0.070px;">Template Results - EXE.bt</div>
<svg width="1" height="1"><path d="M219.8 544.4A3.3 3.3 0 0 1 225.9 543.2M226.3 546A3.3 3.3 0 0 1 220.2 547.2" fill="none" stroke="#d8d8d8" stroke-width="1.3"/><path d="M228 541.6V545.2H224.4Z" fill="#d8d8d8"/><path d="M218.1 548.8V545.2H221.7Z" fill="#d8d8d8"/></svg>
<svg width="1" height="1"><path d="M1097.4 541.3L1104.6 547.7M1104.6 541.3L1097.4 547.7" stroke="#f0f0f0" stroke-width="1.5" fill="none"/></svg>
<div class="a" style="left:1px;top:559px;width:490px;height:28px;background:#505050;border-radius:4px 0 0 0"></div>
<div class="a" style="left:492px;top:559px;width:255px;height:28px;background:#505050;"></div>
<div class="a" style="left:748px;top:559px;width:79px;height:28px;background:#505050;"></div>
<div class="a" style="left:828px;top:559px;width:79px;height:28px;background:#505050;"></div>
<div class="a" style="left:908px;top:559px;width:83px;height:28px;background:#505050;"></div>
<div class="a" style="left:992px;top:559px;width:97px;height:28px;background:#505050;"></div>
<div class="t" style="left:224.0px;top:564px;color:#ececec;-webkit-text-stroke:0.5px currentColor;letter-spacing:0.379px;">Name</div>
<div class="t" style="left:598.0px;top:564px;color:#ececec;-webkit-text-stroke:0.5px currentColor;letter-spacing:0.491px;">Value</div>
<div class="t" style="left:770.0px;top:564px;color:#ececec;-webkit-text-stroke:0.5px currentColor;letter-spacing:0.165px;">Start</div>
<div class="t" style="left:853.0px;top:564px;color:#ececec;-webkit-text-stroke:0.5px currentColor;letter-spacing:0.110px;">Size</div>
<div class="t" style="left:931.0px;top:564px;color:#ececec;-webkit-text-stroke:0.5px currentColor;letter-spacing:0.281px;">Color</div>
<div class="a" style="left:992px;top:559px;width:97px;height:28px;overflow:hidden"><div class="t" style="left:51px;top:5px;-webkit-text-stroke:0.5px currentColor;color:#ececec;letter-spacing:0.9px">Comment</div></div>
<div class="a" style="left:1px;top:588px;width:1088px;height:23px;background:#464646;"></div>
<div class="a" style="left:0;top:0;width:1089px;height:1047px;overflow:hidden">
<div class="a" style="left:1px;top:611px;width:1088px;height:1px;background:#2b2a28;"></div>
<svg width="1" height="1"><polyline points="9.25,594.5 13.75,599 9.25,603.5" fill="none" stroke="#9a9a9a" stroke-width="1.2"/></svg>
<div class="t" style="left:21.0px;top:590px;letter-spacing:0.085px;">struct IMAGE_DOS_HEADER DosHeader</div>
<div class="t" style="left:750.0px;top:590px;letter-spacing:-0.644px;">0h</div>
<div class="t" style="left:830.0px;top:590px;letter-spacing:-0.150px;">40h</div>
<div class="t" style="left:910.0px;top:590px;letter-spacing:-0.092px;">Fg:</div>
<div class="t" style="left:961.0px;top:590px;letter-spacing:-0.291px;">Bg:</div>
<div class="a" style="left:985px;top:590px;width:6px;height:20px;background:#ffd8ff;"></div>
<div class="a" style="left:1px;top:635px;width:1088px;height:1px;background:#2b2a28;"></div>
<svg width="1" height="1"><polyline points="9.25,618.5 13.75,623 9.25,627.5" fill="none" stroke="#9a9a9a" stroke-width="1.2"/></svg>
<div class="t" style="left:21.0px;top:614px;letter-spacing:0.062px;">struct IMAGE_DOS_STUB DosStub</div>
<div class="t" style="left:750.0px;top:614px;letter-spacing:-0.150px;">40h</div>
<div class="t" style="left:830.0px;top:614px;letter-spacing:-0.644px;">4h</div>
<div class="t" style="left:910.0px;top:614px;letter-spacing:-0.092px;">Fg:</div>
<div class="t" style="left:961.0px;top:614px;letter-spacing:-0.291px;">Bg:</div>
<div class="a" style="left:1px;top:659px;width:1088px;height:1px;background:#2b2a28;"></div>
<svg width="1" height="1"><polyline points="9.25,642.5 13.75,647 9.25,651.5" fill="none" stroke="#9a9a9a" stroke-width="1.2"/></svg>
<div class="t" style="left:21.0px;top:638px;letter-spacing:0.145px;">struct IMAGE_NT_HEADERS NtHeader</div>
<div class="t" style="left:750.0px;top:638px;letter-spacing:-0.150px;">44h</div>
<div class="t" style="left:830.0px;top:638px;letter-spacing:-0.190px;">F8h</div>
<div class="t" style="left:910.0px;top:638px;letter-spacing:-0.092px;">Fg:</div>
<div class="t" style="left:961.0px;top:638px;letter-spacing:-0.291px;">Bg:</div>
<div class="a" style="left:985px;top:638px;width:6px;height:20px;background:#ffd8ff;"></div>
<div class="a" style="left:1px;top:683px;width:1088px;height:1px;background:#2b2a28;"></div>
<svg width="1" height="1"><polyline points="9.25,666.5 13.75,671 9.25,675.5" fill="none" stroke="#9a9a9a" stroke-width="1.2"/></svg>
<div class="t" style="left:21.0px;top:662px;letter-spacing:0.042px;">struct IMAGE_SECTION_HEADER SectionHeaders[4]</div>
<div class="t" style="left:750.0px;top:662px;letter-spacing:-0.626px;">13Ch</div>
<div class="t" style="left:830.0px;top:662px;letter-spacing:-0.046px;">A0h</div>
<div class="t" style="left:910.0px;top:662px;letter-spacing:-0.092px;">Fg:</div>
<div class="t" style="left:961.0px;top:662px;letter-spacing:-0.291px;">Bg:</div>
<div class="a" style="left:985px;top:662px;width:6px;height:20px;background:#dcdcdc;"></div>
<div class="a" style="left:1px;top:707px;width:1088px;height:1px;background:#2b2a28;"></div>
<svg width="1" height="1"><polyline points="9.25,690.5 13.75,695 9.25,699.5" fill="none" stroke="#9a9a9a" stroke-width="1.2"/></svg>
<div class="t" style="left:21.0px;top:686px;letter-spacing:0.159px;">struct IMAGE_SECTION_DATA Section[0]</div>
<div class="t" style="left:750.0px;top:686px;letter-spacing:-0.403px;">200h</div>
<div class="t" style="left:830.0px;top:686px;letter-spacing:-0.323px;">15400h</div>
<div class="t" style="left:910.0px;top:686px;letter-spacing:-0.092px;">Fg:</div>
<div class="t" style="left:961.0px;top:686px;letter-spacing:-0.291px;">Bg:</div>
<div class="a" style="left:1px;top:731px;width:1088px;height:1px;background:#2b2a28;"></div>
<svg width="1" height="1"><polyline points="9.25,714.5 13.75,719 9.25,723.5" fill="none" stroke="#9a9a9a" stroke-width="1.2"/></svg>
<div class="t" style="left:21.0px;top:710px;letter-spacing:0.159px;">struct IMAGE_SECTION_DATA Section[1]</div>
<div class="t" style="left:494.0px;top:710px;letter-spacing:-0.004px;">.rsrc</div>
<div class="t" style="left:750.0px;top:710px;letter-spacing:-0.323px;">15600h</div>
<div class="t" style="left:830.0px;top:710px;letter-spacing:-0.403px;">238h</div>
<div class="t" style="left:910.0px;top:710px;letter-spacing:-0.092px;">Fg:</div>
<div class="t" style="left:961.0px;top:710px;letter-spacing:-0.291px;">Bg:</div>
<div class="a" style="left:1px;top:755px;width:1088px;height:1px;background:#2b2a28;"></div>
<svg width="1" height="1"><polyline points="9.25,738.5 13.75,743 9.25,747.5" fill="none" stroke="#9a9a9a" stroke-width="1.2"/></svg>
<div class="t" style="left:21.0px;top:734px;letter-spacing:0.159px;">struct IMAGE_SECTION_DATA Section[2]</div>
<div class="t" style="left:750.0px;top:734px;letter-spacing:-0.323px;">15838h</div>
<div class="t" style="left:830.0px;top:734px;letter-spacing:-0.155px;">1000h</div>
<div class="t" style="left:910.0px;top:734px;letter-spacing:-0.092px;">Fg:</div>
<div class="t" style="left:961.0px;top:734px;letter-spacing:-0.291px;">Bg:</div>
<div class="a" style="left:1px;top:779px;width:1088px;height:1px;background:#2b2a28;"></div>
<svg width="1" height="1"><polyline points="7.0,765.3 11.5,770.7 16.0,765.3" fill="none" stroke="#e0e0e0" stroke-width="1.4"/></svg>
<div class="t" style="left:21.0px;top:758px;letter-spacing:0.071px;">struct IMAGE_EXPORT_DIRECTORY ExportDir</div>
<div class="t" style="left:750.0px;top:758px;letter-spacing:0.250px;">5A8h</div>
<div class="t" style="left:830.0px;top:758px;letter-spacing:-0.332px;">B17h</div>
<div class="t" style="left:910.0px;top:758px;letter-spacing:-0.092px;">Fg:</div>
<div class="t" style="left:961.0px;top:758px;letter-spacing:-0.291px;">Bg:</div>
<div class="t" style="left:994.0px;top:758px;letter-spacing:0.033px;">BASS.dll</div>
<div class="a" style="left:1px;top:803px;width:1088px;height:1px;background:#2b2a28;"></div>
<div class="t" style="left:37.0px;top:782px;letter-spacing:-0.095px;">DWORD Characteristics</div>
<div class="t" style="left:494.0px;top:782px;">0</div>
<div class="t" style="left:750.0px;top:782px;letter-spacing:0.250px;">5A8h</div>
<div class="t" style="left:830.0px;top:782px;letter-spacing:-0.644px;">4h</div>
<div class="t" style="left:910.0px;top:782px;letter-spacing:-0.092px;">Fg:</div>
<div class="t" style="left:961.0px;top:782px;letter-spacing:-0.291px;">Bg:</div>
<div class="a" style="left:1px;top:827px;width:1088px;height:1px;background:#2b2a28;"></div>
<div class="t" style="left:37.0px;top:806px;letter-spacing:-0.020px;">time_t TimeDateStamp</div>
<div class="t" style="left:494.0px;top:806px;letter-spacing:-0.171px;">11/29/2005 14:03:51</div>
<div class="t" style="left:750.0px;top:806px;letter-spacing:0.250px;">5ACh</div>
<div class="t" style="left:830.0px;top:806px;letter-spacing:-0.644px;">4h</div>
<div class="t" style="left:910.0px;top:806px;letter-spacing:-0.092px;">Fg:</div>
<div class="t" style="left:961.0px;top:806px;letter-spacing:-0.291px;">Bg:</div>
<div class="a" style="left:1px;top:851px;width:1088px;height:1px;background:#2b2a28;"></div>
<div class="t" style="left:37.0px;top:830px;letter-spacing:0.284px;">WORD MajorVersion</div>
<div class="t" style="left:494.0px;top:830px;">0</div>
<div class="t" style="left:750.0px;top:830px;letter-spacing:0.250px;">5B0h</div>
<div class="t" style="left:830.0px;top:830px;letter-spacing:-0.644px;">2h</div>
<div class="t" style="left:910.0px;top:830px;letter-spacing:-0.092px;">Fg:</div>
<div class="t" style="left:961.0px;top:830px;letter-spacing:-0.291px;">Bg:</div>
<div class="a" style="left:1px;top:875px;width:1088px;height:1px;background:#2b2a28;"></div>
<div class="t" style="left:37.0px;top:854px;letter-spacing:0.325px;">WORD MinorVersion</div>
<div class="t" style="left:494.0px;top:854px;">0</div>
<div class="t" style="left:750.0px;top:854px;letter-spacing:0.250px;">5B2h</div>
<div class="t" style="left:830.0px;top:854px;letter-spacing:-0.644px;">2h</div>
<div class="t" style="left:910.0px;top:854px;letter-spacing:-0.092px;">Fg:</div>
<div class="t" style="left:961.0px;top:854px;letter-spacing:-0.291px;">Bg:</div>
<div class="a" style="left:1px;top:899px;width:1088px;height:1px;background:#2b2a28;"></div>
<div class="t" style="left:37.0px;top:878px;letter-spacing:0.018px;">DWORD Name</div>
<div class="t" style="left:494.0px;top:878px;letter-spacing:-0.452px;">40EBFh</div>
<div class="t" style="left:750.0px;top:878px;letter-spacing:0.250px;">5B4h</div>
<div class="t" style="left:830.0px;top:878px;letter-spacing:-0.644px;">4h</div>
<div class="t" style="left:910.0px;top:878px;letter-spacing:-0.092px;">Fg:</div>
<div class="t" style="left:961.0px;top:878px;letter-spacing:-0.291px;">Bg:</div>
<div class="t" style="left:994.0px;top:878px;"> FOA = 0x10EBF</div>
<div class="a" style="left:1px;top:923px;width:1088px;height:1px;background:#2b2a28;"></div>
<div class="t" style="left:37.0px;top:902px;letter-spacing:-0.240px;">DWORD Base</div>
<div class="t" style="left:494.0px;top:902px;">1</div>
<div class="t" style="left:750.0px;top:902px;letter-spacing:0.250px;">5B8h</div>
<div class="t" style="left:830.0px;top:902px;letter-spacing:-0.644px;">4h</div>
<div class="t" style="left:910.0px;top:902px;letter-spacing:-0.092px;">Fg:</div>
<div class="t" style="left:961.0px;top:902px;letter-spacing:-0.291px;">Bg:</div>
<div class="a" style="left:1px;top:947px;width:1088px;height:1px;background:#2b2a28;"></div>
<div class="t" style="left:37.0px;top:926px;letter-spacing:0.159px;">DWORD NumberOfFunctions</div>
<div class="t" style="left:494.0px;top:926px;letter-spacing:-0.162px;">95</div>
<div class="t" style="left:750.0px;top:926px;letter-spacing:0.250px;">5BCh</div>
<div class="t" style="left:830.0px;top:926px;letter-spacing:-0.644px;">4h</div>
<div class="t" style="left:910.0px;top:926px;letter-spacing:-0.092px;">Fg:</div>
<div class="t" style="left:961.0px;top:926px;letter-spacing:-0.291px;">Bg:</div>
<div class="a" style="left:1px;top:971px;width:1088px;height:1px;background:#2b2a28;"></div>
<div class="t" style="left:37.0px;top:950px;letter-spacing:0.128px;">DWORD NumberOfNames</div>
<div class="t" style="left:494.0px;top:950px;letter-spacing:-0.162px;">95</div>
<div class="t" style="left:750.0px;top:950px;letter-spacing:0.250px;">5C0h</div>
<div class="t" style="left:830.0px;top:950px;letter-spacing:-0.644px;">4h</div>
<div class="t" style="left:910.0px;top:950px;letter-spacing:-0.092px;">Fg:</div>
<div class="t" style="left:961.0px;top:950px;letter-spacing:-0.291px;">Bg:</div>
<div class="a" style="left:1px;top:995px;width:1088px;height:1px;background:#2b2a28;"></div>
<div class="t" style="left:37.0px;top:974px;letter-spacing:0.174px;">DWORD AddressOfFunctions</div>
<div class="t" style="left:494.0px;top:974px;letter-spacing:-0.310px;">403D0h</div>
<div class="t" style="left:750.0px;top:974px;letter-spacing:0.250px;">5C4h</div>
<div class="t" style="left:830.0px;top:974px;letter-spacing:-0.644px;">4h</div>
<div class="t" style="left:910.0px;top:974px;letter-spacing:-0.092px;">Fg:</div>
<div class="t" style="left:961.0px;top:974px;letter-spacing:-0.291px;">Bg:</div>
<div class="t" style="left:994.0px;top:974px;"> FOA = 0x5D0</div>
<div class="a" style="left:1px;top:1019px;width:1088px;height:1px;background:#2b2a28;"></div>
<div class="t" style="left:37.0px;top:998px;letter-spacing:0.146px;">DWORD AddressOfNames</div>
<div class="t" style="left:494.0px;top:998px;letter-spacing:-0.138px;">4054Ch</div>
<div class="t" style="left:750.0px;top:998px;letter-spacing:0.250px;">5C8h</div>
<div class="t" style="left:830.0px;top:998px;letter-spacing:-0.644px;">4h</div>
<div class="t" style="left:910.0px;top:998px;letter-spacing:-0.092px;">Fg:</div>
<div class="t" style="left:961.0px;top:998px;letter-spacing:-0.291px;">Bg:</div>
<div class="t" style="left:994.0px;top:998px;"> FOA = 0x74C</div>
<div class="a" style="left:1px;top:1043px;width:1088px;height:1px;background:#2b2a28;"></div>
<div class="t" style="left:37.0px;top:1022px;letter-spacing:0.179px;">DWORD AddressOfNameOrdinals</div>
<div class="t" style="left:494.0px;top:1022px;letter-spacing:-0.138px;">406C8h</div>
<div class="t" style="left:750.0px;top:1022px;letter-spacing:0.250px;">5CCh</div>
<div class="t" style="left:830.0px;top:1022px;letter-spacing:-0.644px;">4h</div>
<div class="t" style="left:910.0px;top:1022px;letter-spacing:-0.092px;">Fg:</div>
<div class="t" style="left:961.0px;top:1022px;letter-spacing:-0.291px;">Bg:</div>
<div class="t" style="left:994.0px;top:1022px;"> FOA = 0x8C8</div>
<div class="a" style="left:1px;top:1044px;width:1088px;height:3px;background:#3c3b37;"></div>
<div class="a" style="left:491px;top:588px;width:1px;height:459px;background:#2b2a28;"></div>
<div class="a" style="left:747px;top:588px;width:1px;height:459px;background:#2b2a28;"></div>
<div class="a" style="left:827px;top:588px;width:1px;height:459px;background:#2b2a28;"></div>
<div class="a" style="left:907px;top:588px;width:1px;height:459px;background:#2b2a28;"></div>
<div class="a" style="left:991px;top:588px;width:1px;height:459px;background:#2b2a28;"></div>
</div>
<div class="a" style="left:1089px;top:559px;width:21px;height:490px;background:#272622;"></div>
<svg width="1" height="1"><polyline points="1096.2,571.98 1099.5,568.02 1102.8,571.98" fill="none" stroke="#8e8e8e" stroke-width="1.9"/></svg>
<svg width="1" height="1"><polyline points="1096.2,1036.02 1099.5,1039.98 1102.8,1036.02" fill="none" stroke="#8e8e8e" stroke-width="1.9"/></svg>
<div class="a" style="left:1090px;top:580px;width:19px;height:73px;background:#505050;"></div>
<div class="a" style="left:1px;top:1049px;width:1088px;height:21px;background:#272622;"></div>
<div class="a" style="left:22px;top:1050px;width:975px;height:19px;background:#505050;"></div>
<svg width="1" height="1"><polyline points="12.98,1056.2 9.02,1059.5 12.98,1062.8" fill="none" stroke="#8e8e8e" stroke-width="1.9"/></svg>
<svg width="1" height="1"><polyline points="1076.02,1056.2 1079.98,1059.5 1076.02,1062.8" fill="none" stroke="#8e8e8e" stroke-width="1.9"/></svg>
<div class="t" style="left:1117.0px;top:97px;font-family:'Liberation Sans','Noto Sans CJK SC',sans-serif;font-size:17.8px;color:#e0e0e0;letter-spacing:0.310px;">Inspector</div>
<svg width="1" height="1"><path d="M1517.5 105.8L1525.5 105.8L1521.5 110.4Z" fill="#e6e6e6"/></svg>
<svg width="1" height="1"><path d="M1533.4 104.3L1540.6 110.7M1540.6 104.3L1533.4 110.7" stroke="#f0f0f0" stroke-width="1.5" fill="none"/></svg>
<div class="a" style="left:1113px;top:122px;width:99px;height:28px;background:#505050;border-radius:4px 0 0 0"></div>
<div class="a" style="left:1213px;top:122px;width:311px;height:28px;background:#505050;border-radius:0 4px 0 0"></div>
<div class="a" style="left:1113px;top:151px;width:411px;height:23px;background:#464646;"></div>
<div class="a" style="left:1113px;top:151px;width:411px;height:331px;overflow:hidden">
<div class="a" style="left:0;top:23px;width:411px;height:1px;background:#2b2a28"></div>
<div class="a" style="left:0;top:47px;width:411px;height:1px;background:#2b2a28"></div>
<div class="a" style="left:0;top:71px;width:411px;height:1px;background:#2b2a28"></div>
<div class="a" style="left:0;top:95px;width:411px;height:1px;background:#2b2a28"></div>
<div class="a" style="left:0;top:119px;width:411px;height:1px;background:#2b2a28"></div>
<div class="a" style="left:0;top:143px;width:411px;height:1px;background:#2b2a28"></div>
<div class="a" style="left:0;top:167px;width:411px;height:1px;background:#2b2a28"></div>
<div class="a" style="left:0;top:191px;width:411px;height:1px;background:#2b2a28"></div>
<div class="a" style="left:0;top:215px;width:411px;height:1px;background:#2b2a28"></div>
<div class="a" style="left:0;top:239px;width:411px;height:1px;background:#2b2a28"></div>
<div class="a" style="left:0;top:263px;width:411px;height:1px;background:#2b2a28"></div>
<div class="a" style="left:0;top:287px;width:411px;height:1px;background:#2b2a28"></div>
<div class="a" style="left:0;top:311px;width:411px;height:1px;background:#2b2a28"></div>
<div class="a" style="left:0;top:335px;width:411px;height:1px;background:#2b2a28"></div>
<div class="a" style="left:0;top:359px;width:411px;height:1px;background:#2b2a28"></div>
<div class="a" style="left:99px;top:0;width:1px;height:600px;background:#2b2a28"></div>
</div>
<div class="t" style="left:1144.0px;top:127px;color:#ececec;-webkit-text-stroke:0.5px currentColor;letter-spacing:1.231px;">Type</div>
<div class="t" style="left:1347.0px;top:127px;color:#ececec;-webkit-text-stroke:0.5px currentColor;letter-spacing:0.491px;">Value</div>
<div class="a" style="left:0;top:0;width:1547px;height:482px;overflow:hidden">
<div class="t" style="left:1115.0px;top:153px;letter-spacing:-0.379px;">Binary</div>
<div class="t" style="left:1215.0px;top:153px;letter-spacing:-0.287px;">01001101</div>
<div class="t" style="left:1115.0px;top:177px;letter-spacing:0.009px;">Signed Byte</div>
<div class="t" style="left:1215.0px;top:177px;letter-spacing:-0.162px;">77</div>
<div class="t" style="left:1115.0px;top:201px;letter-spacing:-0.202px;">Unsigned B...</div>
<div class="t" style="left:1215.0px;top:201px;letter-spacing:-0.162px;">77</div>
<div class="t" style="left:1115.0px;top:225px;letter-spacing:0.197px;">Signed Short</div>
<div class="t" style="left:1215.0px;top:225px;letter-spacing:-0.162px;">23117</div>
<div class="t" style="left:1115.0px;top:249px;letter-spacing:-0.145px;">Unsigned S...</div>
<div class="t" style="left:1215.0px;top:249px;letter-spacing:-0.162px;">23117</div>
<div class="t" style="left:1115.0px;top:273px;letter-spacing:0.099px;">Signed Int</div>
<div class="t" style="left:1215.0px;top:273px;letter-spacing:-0.305px;">9460301</div>
<div class="t" style="left:1115.0px;top:297px;letter-spacing:0.081px;">Unsigned Int</div>
<div class="t" style="left:1215.0px;top:297px;letter-spacing:-0.305px;">9460301</div>
<div class="t" style="left:1115.0px;top:321px;letter-spacing:0.056px;">Signed Int64</div>
<div class="t" style="left:1215.0px;top:321px;letter-spacing:-0.162px;">12894362189</div>
<div class="t" style="left:1115.0px;top:345px;letter-spacing:-0.076px;">Unsigned I...</div>
<div class="t" style="left:1215.0px;top:345px;letter-spacing:-0.162px;">12894362189</div>
<div class="t" style="left:1115.0px;top:369px;letter-spacing:0.087px;">Float</div>
<div class="t" style="left:1215.0px;top:369px;letter-spacing:-0.091px;">1.325671e-38</div>
<div class="t" style="left:1115.0px;top:393px;letter-spacing:0.329px;">Double</div>
<div class="t" style="left:1215.0px;top:393px;letter-spacing:-0.121px;">6.37066138261923e-314</div>
<div class="t" style="left:1115.0px;top:417px;letter-spacing:0.014px;">Half Float</div>
<div class="t" style="left:1215.0px;top:417px;letter-spacing:-0.221px;">201.625</div>
<div class="t" style="left:1115.0px;top:441px;letter-spacing:0.004px;">String</div>
<div class="t" style="left:1215.0px;top:441px;letter-spacing:-1.352px;">MZ�</div>
<div class="t" style="left:1115.0px;top:465px;letter-spacing:0.282px;">DOSDATE</div>
<div class="t" style="left:1215.0px;top:465px;letter-spacing:0.100px;">02/13/2025</div>
</div>
<div class="a" style="left:1525px;top:122px;width:21px;height:360px;background:#272622;"></div>
<svg width="1" height="1"><polyline points="1532.2,135.48 1535.5,131.52 1538.8,135.48" fill="none" stroke="#8e8e8e" stroke-width="1.9"/></svg>
<svg width="1" height="1"><polyline points="1532.2,469.52 1535.5,473.48 1538.8,469.52" fill="none" stroke="#8e8e8e" stroke-width="1.9"/></svg>
<div class="a" style="left:1526px;top:143px;width:19px;height:172px;background:#505050;"></div>
<div class="a" style="left:1113px;top:482px;width:434px;height:2px;background:#acacaa;"></div>
<div class="a" style="left:1113px;top:484px;width:108px;height:26px;background:#888888;border-radius:0 0 5px 5px"></div>
<svg width="1" height="1"><path d="M1131 488.5L1121 497H1126.5L1123.2 502L1133.5 494H1128Z" fill="#f4d060"/></svg>
<div class="t" style="left:1142.0px;top:487px;color:#141414;letter-spacing:0.203px;">Inspector</div>
<svg width="1" height="1"><rect x="1229" y="488" width="4.5" height="4.5" fill="#f2d36a"/><rect x="1236" y="493" width="5" height="5" fill="#f2d36a"/><rect x="1236" y="500" width="5" height="5" fill="#f2d36a"/><path d="M1231.5 493V502.5H1236M1231.5 495.5H1236" stroke="#8a8a8a" stroke-width="1" fill="none" stroke-dasharray="1 1"/></svg>
<div class="t" style="left:1250.0px;top:487px;color:#d0d0d0;letter-spacing:0.022px;">Variables</div>
<svg width="1" height="1"><rect x="1335.5" y="488.5" width="9.5" height="15" fill="#fbeea4" stroke="#e8c860" stroke-width="0.8"/><path d="M1338 491V502M1342 491V502" stroke="#b89a38" stroke-width="1" stroke-dasharray="1.5 1.5"/></svg>
<div class="t" style="left:1355.0px;top:487px;color:#d0d0d0;letter-spacing:-0.156px;">Visualize</div>
<svg width="1" height="1"><path d="M1437.5 488.5H1445V503L1441.2 499.5L1437.5 503Z" fill="#fbeea4" stroke="#e8c860" stroke-width="0.8"/></svg>
<div class="a" style="left:1456px;top:484px;width:51px;height:26px;overflow:hidden"><div class="t" style="left:0;top:3px;color:#d0d0d0;letter-spacing:0.3px">Bookmarks</div></div>
<div class="a" style="left:1507px;top:484px;width:40px;height:26px;background:#4a4a48;"></div>
<svg width="1" height="1"><polyline points="1519.5,492 1514.5,497 1519.5,502" fill="none" stroke="#5e5e5e" stroke-width="1.3"/></svg>
<svg width="1" height="1"><polyline points="1532.5,492 1537.5,497 1532.5,502" fill="none" stroke="#c0c0c0" stroke-width="1.3"/></svg>
<div class="t" style="left:1117.0px;top:516px;font-family:'Liberation Sans','Noto Sans CJK SC',sans-serif;font-size:17.8px;color:#e0e0e0;letter-spacing:0.099px;">Disassembler</div>
<svg width="1" height="1"><path d="M1517.5 524.8L1525.5 524.8L1521.5 529.4Z" fill="#e6e6e6"/></svg>
<svg width="1" height="1"><path d="M1533.4 523.3L1540.6 529.7M1540.6 523.3L1533.4 529.7" stroke="#f0f0f0" stroke-width="1.5" fill="none"/></svg>
<div class="a" style="left:1113px;top:541px;width:190px;height:28px;background:#505050;border-radius:4px 0 0 0"></div>
<div class="a" style="left:1304px;top:541px;width:220px;height:28px;background:#505050;border-radius:0 4px 0 0"></div>
<div class="a" style="left:1113px;top:570px;width:411px;height:23px;background:#464646;"></div>
<div class="a" style="left:1113px;top:570px;width:411px;height:161px;overflow:hidden">
<div class="a" style="left:0;top:23px;width:411px;height:1px;background:#2b2a28"></div>
<div class="a" style="left:0;top:47px;width:411px;height:1px;background:#2b2a28"></div>
<div class="a" style="left:0;top:71px;width:411px;height:1px;background:#2b2a28"></div>
<div class="a" style="left:0;top:95px;width:411px;height:1px;background:#2b2a28"></div>
<div class="a" style="left:0;top:119px;width:411px;height:1px;background:#2b2a28"></div>
<div class="a" style="left:0;top:143px;width:411px;height:1px;background:#2b2a28"></div>
<div class="a" style="left:0;top:167px;width:411px;height:1px;background:#2b2a28"></div>
<div class="a" style="left:190px;top:0;width:1px;height:600px;background:#2b2a28"></div>
</div>
<div class="t" style="left:1185.0px;top:546px;color:#ececec;-webkit-text-stroke:0.5px currentColor;letter-spacing:0.879px;">Name</div>
<div class="t" style="left:1453.0px;top:546px;color:#ececec;-webkit-text-stroke:0.5px currentColor;letter-spacing:0.691px;">Value</div>
<div class="a" style="left:1525px;top:541px;width:21px;height:190px;background:#272622;"></div>
<svg width="1" height="1"><polyline points="1532.2,554.98 1535.5,551.02 1538.8,554.98" fill="none" stroke="#8e8e8e" stroke-width="1.9"/></svg>
<svg width="1" height="1"><polyline points="1532.2,718.02 1535.5,721.98 1538.8,718.02" fill="none" stroke="#8e8e8e" stroke-width="1.9"/></svg>
<div class="a" style="left:1526px;top:563px;width:19px;height:87px;background:#505050;"></div>
<div class="a" style="left:1113px;top:731px;width:411px;height:21px;background:#272622;"></div>
<div class="a" style="left:1134px;top:732px;width:154px;height:19px;background:#505050;"></div>
<svg width="1" height="1"><polyline points="1124.98,738.2 1121.02,741.5 1124.98,744.8" fill="none" stroke="#8e8e8e" stroke-width="1.9"/></svg>
<svg width="1" height="1"><polyline points="1512.02,738.2 1515.98,741.5 1512.02,744.8" fill="none" stroke="#8e8e8e" stroke-width="1.9"/></svg>
<div class="a" style="left:1113px;top:752px;width:434px;height:2px;background:#acacaa;"></div>
<div class="a" style="left:1113px;top:754px;width:45px;height:26px;overflow:hidden"><div class="t" style="left:-36.5px;top:4px;color:#d0d0d0;letter-spacing:0.2px">Histogram</div></div>
<svg width="1" height="1"><text x="1174" y="773" font-family='"DejaVu Sans",sans-serif' font-weight="bold" font-size="16" fill="#5b9bd5">Σ</text><path d="M1169 769H1173M1169 771.5H1173M1169 774H1173" stroke="#5b9bd5" stroke-width="1"/></svg>
<div class="t" style="left:1192.0px;top:758px;color:#d0d0d0;letter-spacing:-0.119px;">Checksum</div>
<svg width="1" height="1"><path d="M1285 764L1289 759H1298L1294 764Z" fill="#5b9bd5"/><path d="M1285 764H1294V768H1285Z" fill="#4a86c0"/><path d="M1283.5 772L1286 767M1286.5 772L1289 767M1289.5 772L1292 767" stroke="#5b9bd5" stroke-width="1"/></svg>
<div class="t" style="left:1305.0px;top:758px;color:#d0d0d0;letter-spacing:0.196px;">Process</div>
<div class="a" style="left:1371px;top:754px;width:135px;height:26px;background:#888888;border-radius:0 0 5px 5px"></div>
<div class="a" style="left:1377px;top:759.5px;font-size:9px;line-height:12px;color:#78b0e6;font-family:'DejaVu Sans','Liberation Sans','Noto Sans CJK SC',sans-serif">mov</div>
<svg width="1" height="1"><path d="M1377 768.5H1381M1377 770.5H1381M1377 772.5H1381" stroke="#78b0e6" stroke-width="1"/></svg>
<div class="t" style="left:1400.0px;top:756px;color:#141414;letter-spacing:-0.102px;">Disassembler</div>
<div class="a" style="left:1507px;top:754px;width:40px;height:26px;background:#4a4a48;"></div>
<svg width="1" height="1"><polyline points="1519.5,762 1514.5,767 1519.5,772" fill="none" stroke="#c0c0c0" stroke-width="1.3"/></svg>
<svg width="1" height="1"><polyline points="1532.5,762 1537.5,767 1532.5,772" fill="none" stroke="#5e5e5e" stroke-width="1.3"/></svg>
<div class="t" style="left:1117.0px;top:786px;font-family:'Liberation Sans','Noto Sans CJK SC',sans-serif;font-size:17.8px;color:#e0e0e0;letter-spacing:0.093px;">Functions</div>
<svg width="1" height="1"><path d="M1517.5 794.8L1525.5 794.8L1521.5 799.4Z" fill="#e6e6e6"/></svg>
<svg width="1" height="1"><path d="M1533.4 793.3L1540.6 799.7M1540.6 793.3L1533.4 799.7" stroke="#f0f0f0" stroke-width="1.5" fill="none"/></svg>
<svg width="1" height="1"><polyline points="1123.75,817.0 1128.25,821.5 1123.75,826.0" fill="none" stroke="#9a9a9a" stroke-width="1.2"/></svg>
<div class="t" style="left:1141.0px;top:813px;letter-spacing:-0.052px;">Interface</div>
<svg width="1" height="1"><polyline points="1123.75,839.0 1128.25,843.5 1123.75,848.0" fill="none" stroke="#9a9a9a" stroke-width="1.2"/></svg>
<div class="t" style="left:1141.0px;top:835px;letter-spacing:0.522px;">I/O</div>
<svg width="1" height="1"><polyline points="1123.75,861.0 1128.25,865.5 1123.75,870.0" fill="none" stroke="#9a9a9a" stroke-width="1.2"/></svg>
<div class="t" style="left:1141.0px;top:857px;letter-spacing:0.495px;">Math</div>
<svg width="1" height="1"><polyline points="1123.75,883.0 1128.25,887.5 1123.75,892.0" fill="none" stroke="#9a9a9a" stroke-width="1.2"/></svg>
<div class="t" style="left:1141.0px;top:879px;letter-spacing:0.171px;">String</div>
<svg width="1" height="1"><polyline points="1123.75,905.0 1128.25,909.5 1123.75,914.0" fill="none" stroke="#9a9a9a" stroke-width="1.2"/></svg>
<div class="t" style="left:1141.0px;top:901px;letter-spacing:0.905px;">Tools</div>
<svg width="1" height="1"><polyline points="1123.75,927.0 1128.25,931.5 1123.75,936.0" fill="none" stroke="#9a9a9a" stroke-width="1.2"/></svg>
<div class="t" style="left:1141.0px;top:923px;letter-spacing:0.383px;">All</div>
<div class="t" style="left:1195.0px;top:1050px;color:#8c8c8c;letter-spacing:-0.009px;">Select function and press F1 for help.</div>
<div class="t" style="left:5.0px;top:1074px;color:#e0e0e0;letter-spacing:-0.195px;">Selected: 64 [40h] bytes (Range: 0 [0h] to 63 [3Fh])</div>
<div class="t" style="left:1031.0px;top:1074px;color:#e0e0e0;letter-spacing:-0.297px;">Start: 0 [0h]</div>
<div class="t" style="left:1125.0px;top:1074px;color:#e0e0e0;letter-spacing:-0.463px;">Sel: 64 [40h]</div>
<div class="t" style="left:1222.0px;top:1074px;color:#e0e0e0;letter-spacing:-0.281px;">Size: 92,216</div>
<div class="t" style="left:1335.0px;top:1074px;color:#e0e0e0;letter-spacing:0.346px;">Hex</div>
<div class="t" style="left:1373.0px;top:1074px;color:#e0e0e0;letter-spacing:0.497px;">ANSI</div>
<div class="t" style="left:1418.0px;top:1074px;color:#e0e0e0;letter-spacing:-0.356px;">LIT</div>
<div class="t" style="left:1466.0px;top:1074px;color:#e0e0e0;">W</div>
<div class="t" style="left:1490.0px;top:1074px;color:#e0e0e0;letter-spacing:0.353px;">OVR</div>
<svg width="1" height="1"><rect x="1541.4" y="1091.8" width="3" height="3" fill="#c4c4c4"/><rect x="1541.4" y="1087.8" width="3" height="3" fill="#c4c4c4"/><rect x="1541.4" y="1083.8" width="3" height="3" fill="#c4c4c4"/><rect x="1537.4" y="1091.8" width="3" height="3" fill="#c4c4c4"/><rect x="1537.4" y="1087.8" width="3" height="3" fill="#c4c4c4"/><rect x="1533.4" y="1091.8" width="3" height="3" fill="#c4c4c4"/></svg>
<div class="a" style="left:0px;top:1097px;width:1547px;height:1px;background:#484846;"></div>
<div class="a" style="left:8px;top:1096px;width:422px;height:2px;background:transparent;background-image:repeating-linear-gradient(90deg,#9a9a9a 0 2px,transparent 2px 5px,#8a8a8a 5px 6px,transparent 6px 9px);opacity:0.45"></div>
<div class="a" style="left:1546px;top:0px;width:1px;height:1098px;background:#a4a4a2;"></div>
<div class="a" style="left:0px;top:0px;width:1px;height:1098px;background:#8a8a8a;"></div>
</body></html>
